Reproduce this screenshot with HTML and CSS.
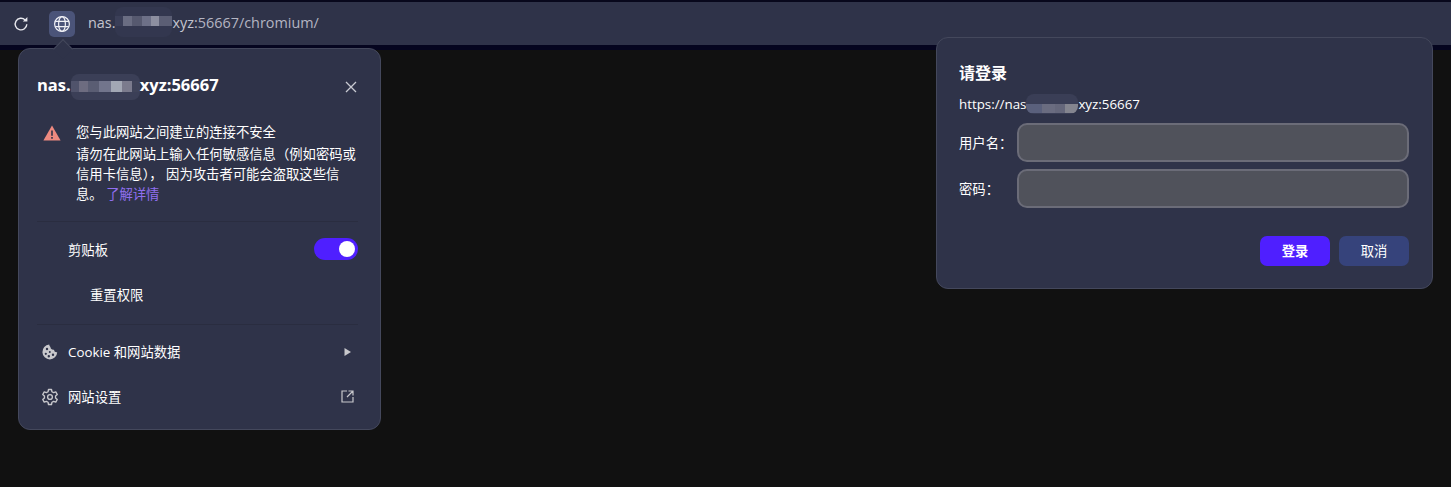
FILE: index.html
```html
<!DOCTYPE html>
<html lang="zh-CN">
<head>
  <meta charset="UTF-8">
  <title>nas xyz:56667</title>
  <link rel="stylesheet" href="styles.css">
</head>
<body>
  <header class="toolbar">
    <button class="reload" aria-label="重新加载">
      <svg width="16" height="16" viewBox="0 0 16 16" fill="none" stroke="#e8e8ee" stroke-width="1.4">
        <path d="M13.8 8.200a5.800 5.800 0 1 1-1.700-4.300"/>
        <path d="M14.400 1v4.600H9.800" fill="#e8e8ee" stroke="none"/>
      </svg>
    </button>
    <button class="site-btn" aria-label="网站信息">
      <svg width="18" height="18" viewBox="0 0 18 18" fill="none" stroke="#f0f0f5" stroke-width="1.2">
        <circle cx="9" cy="9" r="7.4"/>
        <ellipse cx="9" cy="9" rx="3.4" ry="7.4"/>
        <path d="M2.2 6.400h13.600M2.200 11.600h13.600"/>
      </svg>
    </button>
    <div class="address">nas.<span class="mosaic mosaic-bar"></span>xyz<span class="dim">:56667/chromium/</span></div>
  </header>
  <div class="strip"></div>

  <!-- site info bubble -->
  <section class="bubble">
    <div class="bubble-arrow"></div>
    <div class="bubble-head">
      <h2>nas.<span class="mosaic mosaic-title"></span>xyz:56667</h2>
      <svg class="close" width="12" height="12" viewBox="0 0 12 12" stroke="#c9cad2" stroke-width="1.3"><path d="M1 1l10 10M11 1L1 11"/></svg>
    </div>
    <div class="warn">
      <svg class="warn-icon" width="18" height="16" viewBox="0 0 18 16">
        <path d="M9 .5L17.600 15.600H.4z" fill="#ee8a80"/>
        <path d="M8.200 5.600h1.600v5.200H8.200zM8.200 12h1.600v1.700H8.200z" fill="#2f3349"/>
      </svg>
      <div class="warn-text">
        <p class="warn-title">您与此网站之间建立的连接不安全</p>
        <p>请勿在此网站上输入任何敏感信息（例如密码或信用卡信息）， 因为攻击者可能会盗取这些信息。 <a href="#">了解详情</a></p>
      </div>
    </div>
    <div class="sep"></div>
    <div class="row perm">
      <span>剪贴板</span>
      <span class="toggle"><i></i></span>
    </div>
    <div class="reset">重置权限</div>
    <div class="sep"></div>
    <div class="row link cookie">
      <svg class="row-icon" width="16" height="16" viewBox="0 0 16 16">
        <path fill-rule="evenodd" fill="#c8c8cc" d="M7.200.6a7.400 7.400 0 1 0 8 7.600 3 3 0 0 1-3.300-2.500A3.200 3.200 0 0 1 8.400 3 3 3 0 0 1 7.200.6zM5 3.800a1.200 1.200 0 1 1 0 2.400 1.200 1.200 0 0 1 0-2.400zM3.800 8.700a1.100 1.100 0 1 1 0 2.200 1.100 1.100 0 0 1 0-2.200zM7.800 7a1 1 0 1 1 0 2 1 1 0 0 1 0-2zM6.800 11a1.200 1.200 0 1 1 0 2.400 1.200 1.200 0 0 1 0-2.400zM11 9.600a1.200 1.200 0 1 1 0 2.400 1.200 1.200 0 0 1 0-2.400z"/>
      </svg>
      <span class="grow">Cookie 和网站数据</span>
      <svg class="end-icon" width="7" height="8" viewBox="0 0 7 8"><path d="M.5 0L7 4 .5 8z" fill="#c8c8cc"/></svg>
    </div>
    <div class="row link settings">
      <svg class="row-icon" width="18" height="18" viewBox="0 0 24 24" fill="none" stroke="#c8c8cc" stroke-width="1.800" stroke-linejoin="round">
        <circle cx="12" cy="12" r="3.200"/>
        <path d="M10 2h4l.6 3 2.200 1.200 2.900-1 2 3.500-2.300 2v2.600l2.300 2-2 3.500-2.900-1-2.200 1.200-.6 3h-4l-.6-3-2.200-1.200-2.900 1-2-3.500 2.300-2v-2.600l-2.300-2 2-3.500 2.900 1L9.400 5z"/>
      </svg>
      <span class="grow">网站设置</span>
      <svg class="end-icon ext" width="13" height="13" viewBox="0 0 13 13" fill="none" stroke="#c8c8cc" stroke-width="1.200">
        <path d="M6 1H1v11h11V7M7.500 1H12v4.500M12 1L6 7"/>
      </svg>
    </div>
  </section>

  <!-- http auth dialog -->
  <section class="dialog">
    <h3>请登录</h3>
    <p class="origin">https://nas<span class="mosaic mosaic-origin"></span>xyz:56667</p>
    <div class="field"><label for="user">用户名：</label><input id="user" type="text"></div>
    <div class="field"><label for="pass">密码：</label><input id="pass" type="password"></div>
    <div class="actions">
      <button class="btn primary">登录</button>
      <button class="btn secondary">取消</button>
    </div>
  </section>
</body>
</html>
```

FILE: styles.css
```css
* {
  box-sizing: border-box;
  margin: 0;
  padding: 0;
}
html, body {
  height: 100%;
}
body {
  position: relative;
  overflow: hidden;
  background-color: #111111;
  color: #fff;
  font-family: "Open Sans", "Noto Sans CJK SC", sans-serif;
  font-size: 13.33px;
}
button {
  font-family: inherit;
  border: none;
  background: none;
  color: inherit;
}

/* toolbar */
.toolbar {
  display: flex;
  align-items: center;
  height: 45px;
  border-top: 2px solid #08081c;
  background-color: #2f3349;
}
.reload {
  display: flex;
  margin-left: 13px;
}
.site-btn {
  display: flex;
  align-items: center;
  justify-content: center;
  width: 26px;
  height: 26px;
  margin-left: 20px;
  border-radius: 5px;
  background-color: #4b5479;
}
.address {
  margin-left: 13px;
  font-size: 14.4px;
  color: #c4c5cf;
}
.address .dim {
  color: #b4b5c2;
}
.strip {
  height: 5px;
  background-color: #05051f;
}

/* pixelated bits */
.mosaic {
  display: inline-block;
  vertical-align: middle;
  border-radius: 8px;
  background-repeat: no-repeat;
}
.mosaic-bar {
  width: 57px;
  height: 30px;
  margin-top: -4px;
  background-image: linear-gradient(90deg, #3b3f58 0 14%, #6a6d82 14% 30%, #56596f 30% 48%, #6d7087 48% 64%, #8d8fa0 64% 78%, #5b5e74 78% 100%);
  background-size: 100% 10px;
  background-position: 0 9px;
  background-color: #33374f;
}
.mosaic-title {
  width: 69px;
  height: 26px;
  background-image: linear-gradient(90deg, #50536b 0 12%, #6d6c80 12% 25%, #5a5d73 25% 40%, #72758c 40% 58%, #a2a7b4 58% 74%, #7b7b8d 74% 88%, #3f4359 88% 100%);
  background-size: 100% 11px;
  background-position: 0 7px;
  background-color: #3b3f57;
}
.mosaic-origin {
  width: 52px;
  height: 20px;
  margin-top: -3px;
  background-image: linear-gradient(90deg, #5a607c 0 30%, #6a6c80 30% 55%, #65677b 55% 75%, #84858f 75% 100%);
  background-size: 100% 9px;
  background-position: 0 10px;
  background-color: #3a3e56;
}

/* bubble */
.bubble {
  position: absolute;
  top: 48px;
  left: 18px;
  width: 363px;
  height: 382px;
  padding: 0 22px 0 18px;
  border: 1px solid #44485c;
  border-radius: 12px;
  background-color: #2f3349;
}
.bubble-arrow {
  position: absolute;
  top: -7px;
  left: 37px;
  width: 14px;
  height: 14px;
  transform: rotate(45deg);
  border-top: 1px solid #44485c;
  border-left: 1px solid #44485c;
  background-color: #2f3349;
}
.bubble-head {
  display: flex;
  align-items: center;
  justify-content: space-between;
  height: 74px;
  padding-top: 1px;
}
.bubble-head h2 {
  font-size: 16.5px;
  font-weight: 700;
}
.close {
  margin-right: 1px;
}
.warn {
  display: flex;
  gap: 15px;
  padding-left: 6px;
  height: 98px;
}
.warn-icon {
  flex: none;
  margin-top: 2px;
}
.warn-text {
  line-height: 20px;
}
.warn-text p {
  width: 282px;
}
.warn-title {
  line-height: 18px;
  margin-bottom: 3px;
}
.warn-text a {
  color: #8f6ff0;
  text-decoration: none;
}
.sep {
  height: 1px;
  background-color: #2a2d40;
}
.row {
  display: flex;
  align-items: center;
}
.perm {
  justify-content: space-between;
  height: 54px;
  padding-left: 31px;
}
.toggle {
  display: flex;
  align-items: center;
  justify-content: flex-end;
  width: 44px;
  height: 22px;
  padding-right: 3px;
  border-radius: 11px;
  background-color: #4f1fff;
}
.toggle i {
  width: 16px;
  height: 16px;
  border-radius: 50%;
  background-color: #fff;
}
.reset {
  height: 48px;
  padding-left: 53px;
  padding-top: 10px;
  line-height: 18px;
}
.link {
  height: 45px;
}
.cookie {
  margin-top: 4px;
}
.row-icon {
  flex: none;
  width: 18px;
  margin-left: 4px;
}
.grow {
  flex: 1;
  margin-left: 9px;
}
.end-icon {
  margin-right: 7px;
}
.ext {
  margin-right: 4px;
}

/* dialog */
.dialog {
  position: absolute;
  top: 37px;
  left: 936px;
  width: 497px;
  height: 252px;
  padding: 24px 23px 0 22px;
  border: 1px solid #44485c;
  border-radius: 12px;
  background-color: #2f3349;
}
.dialog h3 {
  font-size: 16px;
  font-weight: 700;
  line-height: 22px;
}
.origin {
  margin-top: 11px;
  line-height: 18px;
}
.field {
  display: flex;
  align-items: center;
  margin-top: 7px;
}
.origin + .field {
  margin-top: 9px;
}
.field label {
  flex: none;
  width: 58px;
  padding-top: 1px;
}
.field input {
  flex: 1;
  min-width: 0;
  height: 39px;
  border: 2px solid #6b6c78;
  border-radius: 10px;
  background-color: #50525b;
}
.actions {
  display: flex;
  justify-content: flex-end;
  gap: 9px;
  margin-top: 28px;
}
.btn {
  width: 70px;
  height: 30px;
  border-radius: 7px;
  font-size: 13.33px;
}
.primary {
  background-color: #4f1fff;
  font-weight: 700;
}
.secondary {
  background-color: #36437b;
}
```
